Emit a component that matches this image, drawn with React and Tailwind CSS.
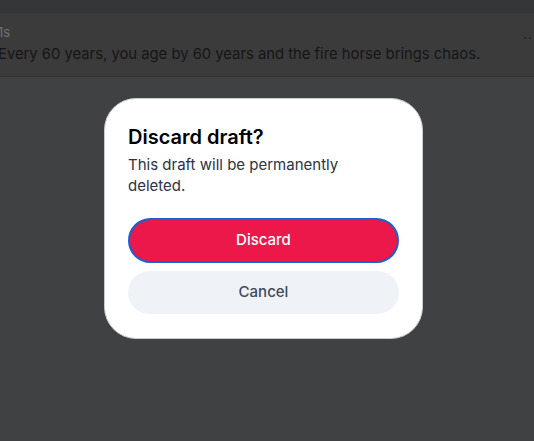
export default function App() {
  return (
    <div className="relative h-[441px] w-[534px] overflow-hidden bg-[#404143] font-['Inter',sans-serif]">
      {/* page behind the dimmed overlay */}
      <div className="h-[12px] bg-[#353638]" />
      <div className="flex h-[65px] items-start justify-between border-y border-[#333436] bg-[#3b3b3c] pt-[10px]">
        <div className="-ml-[2px] flex flex-col">
          <span className="text-[13px] leading-[18px] text-[#707173]">1s</span>
          <span className="mt-[3px] text-[14.8px] leading-[20px] text-[#151515]">
            Every 60 years, you age by 60 years and the fire horse brings chaos.
          </span>
        </div>
        <span className="-mr-[4px] mt-[4px] text-[14px] leading-none tracking-[1px] text-[#1a1a1a]">...</span>
      </div>

      {/* dialog */}
      <div className="absolute inset-0 flex items-center justify-center pb-[4px] pr-[7px]">
        <div className="w-[319px] rounded-[32px] border border-[#c9ccd2] bg-white px-[23px] pb-[24px] pt-[25px]">
          <h2 className="text-[20px] font-semibold leading-[26px] text-black">Discard draft?</h2>
          <p className="mt-[4px] pr-[30px] text-[15px] leading-[21px] text-[#2b3442]">
            This draft will be permanently deleted.
          </p>
          <div className="mt-[22px] flex flex-col gap-[8px]">
            <button className="h-[45px] w-full rounded-full border-2 border-[#1a5fd4] bg-[#eb1849] text-[15px] font-medium text-white">
              Discard
            </button>
            <button className="h-[43px] w-full rounded-full bg-[#eff2f7] text-[15px] font-medium text-[#3f4a5c]">
              Cancel
            </button>
          </div>
        </div>
      </div>
    </div>
  );
}
